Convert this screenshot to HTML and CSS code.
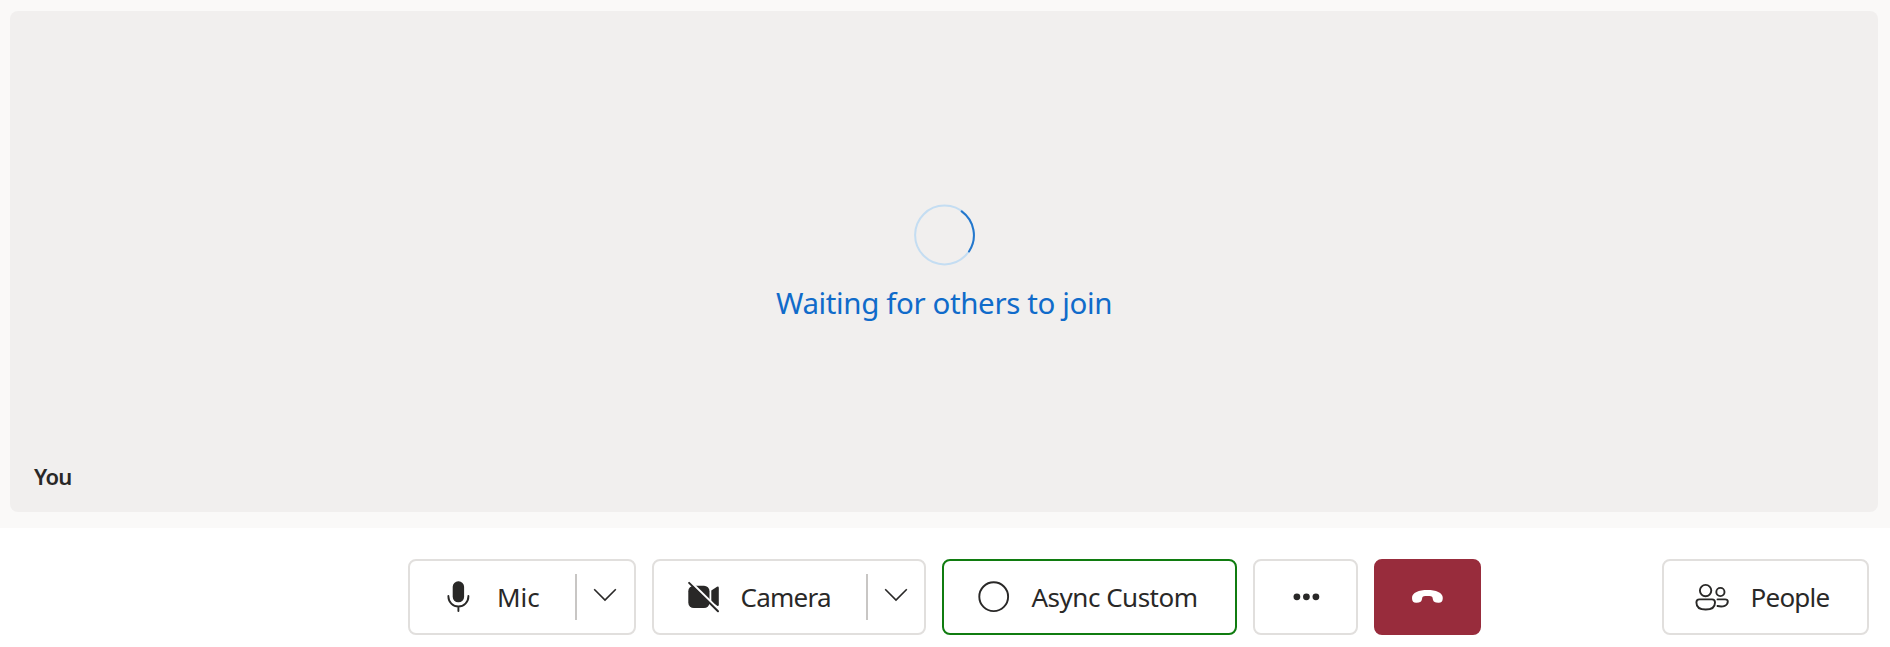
FILE: index.html
```html
<!DOCTYPE html>
<html lang="en">
<head>
<meta charset="utf-8">
<title>Call</title>
<link rel="stylesheet" href="styles.css">
</head>
<body>
<main class="stage">
  <section class="tile">
    <div class="waiting">
      <svg class="spinner" viewBox="0 0 62 62"><circle class="track" cx="31.5" cy="31" r="29.4"/><path class="arc" d="M48.7 7.4A29.4 29.4 0 0 1 56 47.5"/></svg>
      <p class="message">Waiting for others to join</p>
    </div>
    <span class="name">You</span>
  </section>
</main>
<footer class="bar">
  <div class="controls">
    <div class="button mic">
      <svg class="icon" viewBox="0 0 40 40"><rect class="fill" x="13.7" y="4.3" width="11.4" height="21" rx="5.5"/><path class="line" d="M9.4 19v.5a10 10 0 0 0 20 0v-.5M19.4 29.5v4.6"/></svg>
      <span class="label">Mic</span>
      <span class="divider"></span>
      <svg class="chevron" viewBox="0 0 24 14"><path d="M1.2 1.3L12 12L22.8 1.3"/></svg>
    </div>
    <div class="button camera">
      <svg class="icon" viewBox="0 0 40 40"><rect class="fill" x="5.3" y="8.7" width="21.2" height="22.3" rx="5.5"/><path class="fill" d="M28.3 13.5L34 9.8Q35.8 9 35.8 11V27.5Q35.8 29.8 34 28.8L28.3 25Z"/><path class="gap" d="M8 5.4L37 33.9"/><path class="slash" d="M6.1 5.9L35 34.3"/></svg>
      <span class="label">Camera</span>
      <span class="divider"></span>
      <svg class="chevron" viewBox="0 0 24 14"><path d="M1.2 1.3L12 12L22.8 1.3"/></svg>
    </div>
    <div class="button custom">
      <svg class="icon" viewBox="0 0 40 40"><circle class="line" cx="20.7" cy="19.7" r="14.4"/></svg>
      <span class="label">Async Custom</span>
    </div>
    <div class="button more">
      <svg class="icon" viewBox="0 0 40 40"><circle class="fill" cx="10.9" cy="19.8" r="3.4"/><circle class="fill" cx="20.4" cy="19.8" r="3.4"/><circle class="fill" cx="29.9" cy="19.8" r="3.4"/></svg>
    </div>
    <div class="button hangup">
      <svg class="icon" viewBox="0 0 40 40"><path class="phone" d="M5 21C5 15.500 12 13 20.400 13S35.800 15.500 35.800 21C35.800 24.500 34 26 31.300 25.800L29 25.500C27 25.200 26.200 24 25.900 22.500L25.500 20.500C25.200 19.200 23.500 18.900 20.400 18.900S15.600 19.200 15.300 20.500L14.900 22.500C14.600 24 13.800 25.200 11.800 25.500L9.500 25.800C6.800 26 5 24.500 5 21Z"/></svg>
    </div>
  </div>
  <div class="button people">
    <svg class="icon" viewBox="0 0 40 40"><g class="line"><circle cx="12.600" cy="13.600" r="5.700"/><circle cx="27.400" cy="15" r="4.100"/><path d="M6.400 22.400H19Q22 22.400 22 25.400C22 30.400 17.900 32.500 12.700 32.500S3.400 30.400 3.400 25.400Q3.400 22.400 6.400 22.400ZM24.500 22.400H32Q34.800 22.400 34.800 24.600C34.800 28.800 30 30.200 24.500 29"/></g></svg>
    <span class="label">People</span>
  </div>
</footer>
</body>
</html>
```
FILE: styles.css
```css
* { box-sizing: border-box; }
body {
  margin: 0;
  background: #fff;
  color: #292827;
  font-family: "Noto Sans", "Open Sans", sans-serif;
  font-size: 26px;
}
.stage { height: 528px; padding: 11px 12px 16px 10px; background: #faf9f8; }
.tile {
  display: flex;
  flex-direction: column;
  height: 501px;
  padding: 193px 24px 20px;
  border-radius: 8px;
  background: #f1efee;
}
.waiting { display: flex; flex-direction: column; align-items: center; gap: 15px; flex: 1; }
.spinner { width: 62px; height: 62px; fill: none; stroke-width: 2; }
.track { stroke: #c4ddf2; }
.arc { stroke: #2477cc; stroke-linecap: round; }
.message { margin: 0; color: #106bca; font-size: 29.5px; line-height: 44px; letter-spacing: -0.38px; white-space: nowrap; }
.name { font-size: 22px; font-weight: 600; line-height: 32px; letter-spacing: -0.7px; }
.bar { display: flex; align-items: flex-start; height: 119px; padding: 31px 21px 0 408px; }
.controls { display: flex; gap: 16px; flex: 1; }
.button {
  display: flex;
  align-items: center;
  height: 76px;
  padding: 0 0 0 29px;
  border: 2px solid #e1dfdd;
  border-radius: 8px;
  background: #fff;
}
.mic { width: 228px; }
.camera { width: 274px; }
.custom { width: 295px; border-color: #107c10; }
.more { width: 105px; padding-left: 31px; }
.hangup { width: 107px; padding-left: 31px; border-color: #982c3c; background: #982c3c; }
.people { width: 207px; }
.icon { width: 40px; height: 40px; flex: none; }
.fill { fill: #292827; }
.line { fill: none; stroke: #292827; stroke-width: 1.9; stroke-linecap: round; }
.gap { fill: none; stroke: #fff; stroke-width: 2.5; }
.slash { fill: none; stroke: #292827; stroke-width: 2; stroke-linecap: round; }
.phone { fill: #fff; }
.label { margin-left: 18px; line-height: 36px; white-space: nowrap; }
.camera .label, .people .label { margin-left: 17.5px; letter-spacing: -0.75px; }
.custom .label { margin-left: 18.5px; letter-spacing: -0.5px; }
.divider { width: 2px; height: 46px; margin: 0 16px 0 auto; background: #c8c6c4; }
.chevron { width: 24px; height: 14px; margin: -4px 17px 0 0; fill: none; stroke: #292827; stroke-width: 1.6; }
.camera .chevron { margin-right: 16px; }
```
